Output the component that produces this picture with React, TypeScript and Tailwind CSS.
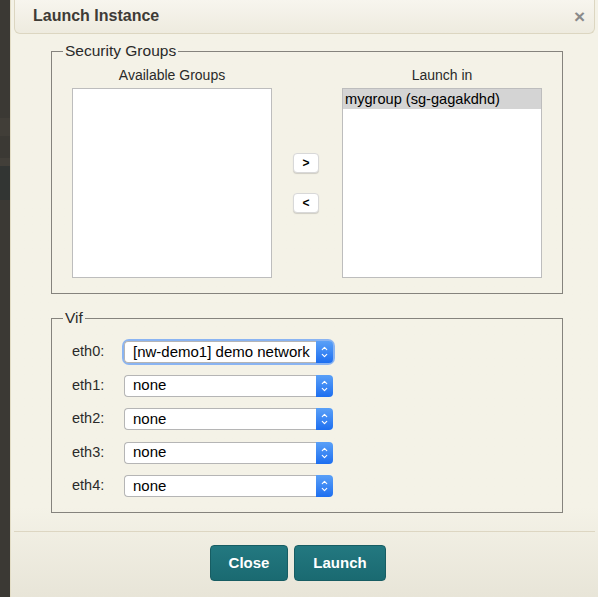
import { ChevronUp, ChevronDown } from 'lucide-react';

const vifRows = [
  { label: 'eth0:', value: '[nw-demo1] demo network', focused: true },
  { label: 'eth1:', value: 'none' },
  { label: 'eth2:', value: 'none' },
  { label: 'eth3:', value: 'none' },
  { label: 'eth4:', value: 'none' },
];

function FakeSelect({ value, focused }: { value: string; focused?: boolean }) {
  return (
    <div
      className={
        focused
          ? 'flex h-[22px] w-[209px] items-stretch rounded-[5px] shadow-[0_0_0_2px_#8ab4f2]'
          : 'flex h-[22px] w-[209px] items-stretch rounded-[5px]'
      }
    >
      <div className="flex flex-1 items-center rounded-l-[4px] border border-r-0 border-[#b5b5b5] bg-white pl-[8px] text-[15px] text-black">
        {value}
      </div>
      <div className="flex w-[17px] flex-col items-center justify-center rounded-r-[4px] bg-gradient-to-b from-[#5aa0f7] to-[#1c6ef0] text-white">
        <ChevronUp size={9} strokeWidth={3} className="-mb-[1px]" />
        <ChevronDown size={9} strokeWidth={3} className="-mt-[1px]" />
      </div>
    </div>
  );
}

function ListBox({ items }: { items: string[] }) {
  return (
    <div className="h-[190px] w-[200px] border border-[#bdbdbd] bg-white">
      {items.map((it) => (
        <div key={it} className="h-[20px] bg-[#d4d4d4] pl-[2px] text-[14.6px] leading-[20px] text-black">
          {it}
        </div>
      ))}
    </div>
  );
}

function MoveButton({ children }: { children: string }) {
  return (
    <button className="h-[20px] w-[26px] rounded-[4px] border border-[#d8d8d8] bg-white text-[12px] font-bold leading-none text-black shadow-[0_1px_1px_rgba(0,0,0,0.15)]">
      {children}
    </button>
  );
}

export default function App() {
  return (
    <div className="flex h-[597px] w-[598px] overflow-hidden bg-[#3b3934] font-['Liberation_Sans',Arial,sans-serif]">
      <div className="flex w-[10px] flex-col">
        <div className="h-[118px]" />
        <div className="h-[18px] bg-[#413e38]" />
        <div className="h-[22px]" />
        <div className="h-[8px] bg-[#423f39]" />
        <div className="h-[34px] bg-[#323533]" />
      </div>
      <div className="flex flex-1 flex-col border-l border-[#e3ddc6] bg-gradient-to-b from-[#f4f2e7] from-85% to-[#e8e5d8]">
        <div className="mx-[3px] flex h-[34px] items-center justify-between rounded-b-[6px] border border-t-0 border-[#dcd6c1] bg-gradient-to-b from-[#f7f5ee] to-[#eeebdf] pl-[18px] pr-[9px]">
          <span className="pb-[2px] text-[16px] font-bold text-[#3e3b36]">Launch Instance</span>
          <span className="pb-[1px] text-[19px] font-bold leading-none text-[#8a8a8a]">×</span>
        </div>

        <fieldset className="ml-[40px] mt-[8px] w-[512px] border border-[#85837d] px-[20px] pb-[15px]">
          <legend className="ml-[-9px] px-[2px] text-[15.5px] leading-[18px] text-[#2a2a2a]">Security Groups</legend>
          <div className="mt-[6px] flex items-end">
            <div className="flex flex-col items-center">
              <div className="mb-[4px] text-[14px] leading-[18px] text-[#2a2a2a]">Available Groups</div>
              <ListBox items={[]} />
            </div>
            <div className="flex h-[190px] flex-1 flex-col items-center justify-center gap-[20px] pr-[2px]">
              <MoveButton>&gt;</MoveButton>
              <MoveButton>&lt;</MoveButton>
            </div>
            <div className="flex flex-col items-center">
              <div className="mb-[4px] text-[14px] leading-[18px] text-[#2a2a2a]">Launch in</div>
              <ListBox items={['mygroup (sg-gagakdhd)']} />
            </div>
          </div>
        </fieldset>

        <fieldset className="ml-[40px] mt-[15px] w-[512px] border border-[#85837d] px-[20px] pb-[15px]">
          <legend className="ml-[-9px] px-[2px] text-[15.5px] leading-[18px] text-[#2a2a2a]">Vif</legend>
          <div className="mt-[14px] flex flex-col gap-[11.5px]">
            {vifRows.map((r) => (
              <div key={r.label} className="flex items-center">
                <span className="w-[52px] text-[14.5px] text-[#2a2a2a]">{r.label}</span>
                <FakeSelect value={r.value} focused={r.focused} />
              </div>
            ))}
          </div>
        </fieldset>

        <div className="mx-[3px] mt-[18px] border-t border-[#ddd6c2]" />

        <div className="flex gap-[6px] pl-[199px] pt-[13px]">
          <button className="h-[36px] w-[78px] rounded-[4px] border border-[#175d63] bg-gradient-to-b from-[#237880] to-[#1a6a71] text-[15px] font-bold text-white">
            Close
          </button>
          <button className="h-[36px] w-[92px] rounded-[4px] border border-[#175d63] bg-gradient-to-b from-[#237880] to-[#1a6a71] text-[15px] font-bold text-white">
            Launch
          </button>
        </div>
      </div>
    </div>
  );
}
